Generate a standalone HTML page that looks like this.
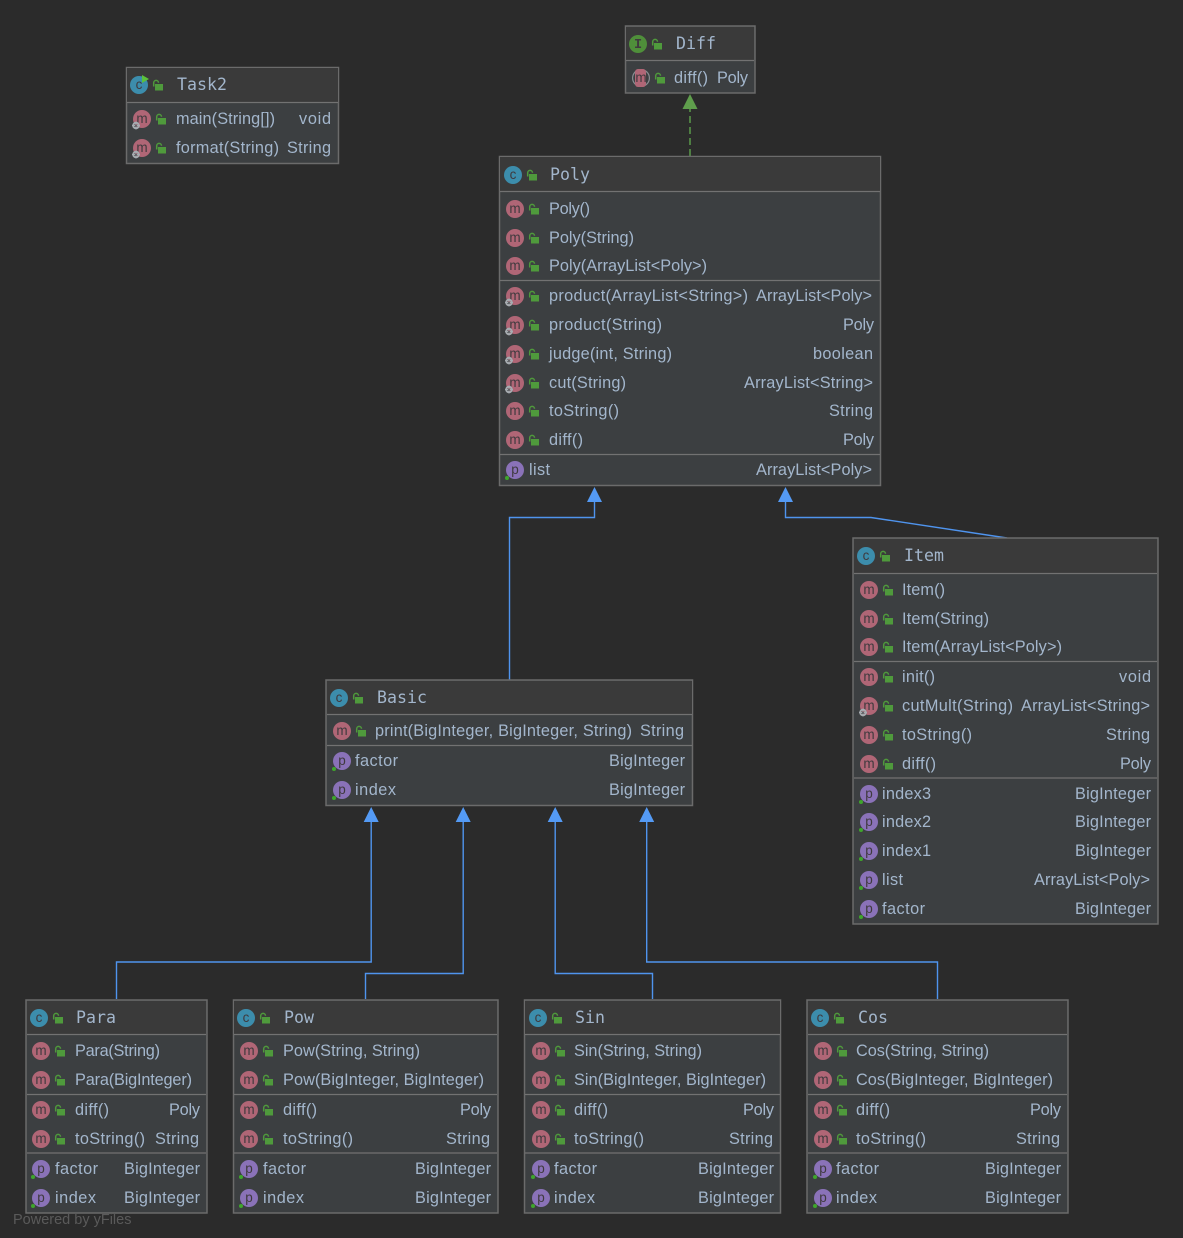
<!DOCTYPE html>
<html lang="en"><head><meta charset="utf-8"><title>Diagram</title>
<style>
html,body{margin:0;padding:0;background:#2b2b2b}
svg{display:block}
.b{fill:#3c3f41;stroke:#6b6b6b;stroke-width:1.5}
.h{fill:#3a3a3a}
.s{stroke:#727272;stroke-width:1.2}
.t{font:16.3px "Liberation Sans",sans-serif;fill:#a3b6cc}
.r{text-anchor:end}
.n{font:16.6px "DejaVu Sans Mono","Liberation Mono",monospace;fill:#a3b6cc}
.i{font:13.5px "Liberation Sans",sans-serif;text-anchor:middle;fill:#3f3a3e}
.c{fill:#3c8dac}.m{fill:#b06676}.p{fill:#8a72b8}.g{fill:#4f8f3a}
.e{fill:none;stroke:#4f94ee;stroke-width:1.4}
.a{fill:#549af4}
</style></head>
<body>
<svg width="1183" height="1238" viewBox="0 0 1183 1238" xmlns="http://www.w3.org/2000/svg">
<defs>
<g id="l"><rect x="-3" y="-1" width="8" height="6.500" fill="#4f9a3c"/><path d="M-4.300 1.500V-2.200a2.400 2.400 0 0 1 4.800 0" fill="none" stroke="#4f9a3c" stroke-width="1.500"/></g>
<g id="gr"><circle cx="-6" cy="6.500" r="2.800" fill="none" stroke="#a6abb0" stroke-width="2"/><path d="M-6 2.500v8M-10 6.500h8" stroke="#a6abb0" stroke-width="1"/><circle cx="-6" cy="6.500" r="1" fill="#5d6064"/></g>
<circle id="d" cx="-8" cy="8" r="2" fill="#3fa52c"/>
</defs>
<rect width="1183" height="1238" fill="#2b2b2b"/>

<!-- edges -->
<path class="e" d="M509.500 680V517.500H594.500V500"/>
<path class="e" d="M1007 538L871 517.500H785.500V500"/>
<path class="e" d="M116.500 999V962H371.200V820"/>
<path class="e" d="M365.500 999V973.500H463.200V820"/>
<path class="e" d="M652.500 999V973.500H555.200V820"/>
<path class="e" d="M937.500 999V962H646.700V820"/>
<path class="a" d="M594.500 487l7.500 15h-15zM785.500 487l7.500 15h-15zM371.200 807l7.500 15h-15zM463.200 807l7.500 15h-15zM555.200 807l7.500 15h-15zM646.700 807l7.500 15h-15z"/>
<path d="M690 156V108" fill="none" stroke="#5b9a4a" stroke-width="1.500" stroke-dasharray="7 4"/>
<path d="M690 94l7.500 15h-15z" fill="#5f9e4c"/>

<!-- Task2 -->
<rect class="b" x="126.500" y="67.500" width="212" height="96"/><rect class="h" x="127" y="68" width="211" height="34"/><path class="s" d="M127 102.500H338"/>
<g transform="translate(139 85)"><circle class="c" r="9"/><text class="i" y="4">c</text><path d="M3-10l7 4-7 4z" fill="#5cc13a"/><use href="#l" x="19"/></g><text class="n" x="177" y="90">Task2</text>
<g transform="translate(142 119)"><circle class="m" r="9"/><text class="i" y="4">m</text><use href="#gr"/><use href="#l" x="19"/></g><text class="t" x="176" y="124" textLength="99">main(String[])</text><text class="t r" x="331" y="124" textLength="32">void</text>
<g transform="translate(142 148)"><circle class="m" r="9"/><text class="i" y="4">m</text><use href="#gr"/><use href="#l" x="19"/></g><text class="t" x="176" y="153" textLength="103">format(String)</text><text class="t r" x="331" y="153" textLength="44">String</text>

<!-- Diff -->
<rect class="b" x="625.500" y="26" width="129.500" height="67"/><rect class="h" x="626" y="27" width="128" height="33"/><path class="s" d="M626 60.500H754"/>
<g transform="translate(638 44)"><circle class="g" r="9"/><text class="i" y="4" style="font-family:'Liberation Mono',monospace;font-weight:bold">I</text><use href="#l" x="19"/></g><text class="n" x="676" y="49">Diff</text>
<g transform="translate(641 78)"><circle r="9" fill="#8a8f94"/><circle r="7.800" fill="#3c3f41"/><rect x="-6" y="-9" width="11" height="18" rx="3" class="m"/><text class="i" y="4">m</text><use href="#l" x="19"/></g><text class="t" x="674" y="83" textLength="34">diff()</text><text class="t r" x="748" y="83" textLength="31">Poly</text>

<!-- Poly -->
<rect class="b" x="499.500" y="156.500" width="381" height="329"/><rect class="h" x="500" y="157" width="380" height="34"/><path class="s" d="M500 191.500H880M500 280.500H880M500 454.500H880"/>
<g transform="translate(513 175)"><circle class="c" r="9"/><text class="i" y="4">c</text><use href="#l" x="19"/></g><text class="n" x="550" y="180">Poly</text>
<g transform="translate(515 209)"><circle class="m" r="9"/><text class="i" y="4">m</text><use href="#l" x="19"/></g><text class="t" x="549" y="214" textLength="41">Poly()</text>
<g transform="translate(515 238)"><circle class="m" r="9"/><text class="i" y="4">m</text><use href="#l" x="19"/></g><text class="t" x="549" y="243" textLength="85">Poly(String)</text>
<g transform="translate(515 266)"><circle class="m" r="9"/><text class="i" y="4">m</text><use href="#l" x="19"/></g><text class="t" x="549" y="271" textLength="158">Poly(ArrayList&lt;Poly&gt;)</text>
<g transform="translate(515 296)"><circle class="m" r="9"/><text class="i" y="4">m</text><use href="#gr"/><use href="#l" x="19"/></g><text class="t" x="549" y="301" textLength="199">product(ArrayList&lt;String&gt;)</text><text class="t r" x="872" y="301" textLength="116">ArrayList&lt;Poly&gt;</text>
<g transform="translate(515 325)"><circle class="m" r="9"/><text class="i" y="4">m</text><use href="#gr"/><use href="#l" x="19"/></g><text class="t" x="549" y="330" textLength="113">product(String)</text><text class="t r" x="874" y="330" textLength="31">Poly</text>
<g transform="translate(515 354)"><circle class="m" r="9"/><text class="i" y="4">m</text><use href="#gr"/><use href="#l" x="19"/></g><text class="t" x="549" y="359" textLength="123">judge(int, String)</text><text class="t r" x="873" y="359" textLength="60">boolean</text>
<g transform="translate(515 383)"><circle class="m" r="9"/><text class="i" y="4">m</text><use href="#gr"/><use href="#l" x="19"/></g><text class="t" x="549" y="388" textLength="77">cut(String)</text><text class="t r" x="873" y="388" textLength="129">ArrayList&lt;String&gt;</text>
<g transform="translate(515 411)"><circle class="m" r="9"/><text class="i" y="4">m</text><use href="#l" x="19"/></g><text class="t" x="549" y="416" textLength="70">toString()</text><text class="t r" x="873" y="416" textLength="44">String</text>
<g transform="translate(515 440)"><circle class="m" r="9"/><text class="i" y="4">m</text><use href="#l" x="19"/></g><text class="t" x="549" y="445" textLength="34">diff()</text><text class="t r" x="874" y="445" textLength="31">Poly</text>
<g transform="translate(515 470)"><circle class="p" r="9"/><text class="i" y="4">p</text><use href="#d"/></g><text class="t" x="529" y="475" textLength="21">list</text><text class="t r" x="872" y="475" textLength="116">ArrayList&lt;Poly&gt;</text>

<!-- Item -->
<rect class="b" x="853" y="538" width="305" height="386"/><rect class="h" x="854" y="539" width="303" height="34"/><path class="s" d="M854 573.500H1157M854 661.500H1157M854 778H1157"/>
<g transform="translate(866 556)"><circle class="c" r="9"/><text class="i" y="4">c</text><use href="#l" x="19"/></g><text class="n" x="904" y="561">Item</text>
<g transform="translate(869 590)"><circle class="m" r="9"/><text class="i" y="4">m</text><use href="#l" x="19"/></g><text class="t" x="902" y="595" textLength="43">Item()</text>
<g transform="translate(869 619)"><circle class="m" r="9"/><text class="i" y="4">m</text><use href="#l" x="19"/></g><text class="t" x="902" y="624" textLength="87">Item(String)</text>
<g transform="translate(869 647)"><circle class="m" r="9"/><text class="i" y="4">m</text><use href="#l" x="19"/></g><text class="t" x="902" y="652" textLength="160">Item(ArrayList&lt;Poly&gt;)</text>
<g transform="translate(869 677)"><circle class="m" r="9"/><text class="i" y="4">m</text><use href="#l" x="19"/></g><text class="t" x="902" y="682" textLength="33">init()</text><text class="t r" x="1151" y="682" textLength="32">void</text>
<g transform="translate(869 706)"><circle class="m" r="9"/><text class="i" y="4">m</text><use href="#gr"/><use href="#l" x="19"/></g><text class="t" x="902" y="711" textLength="111">cutMult(String)</text><text class="t r" x="1150" y="711" textLength="129">ArrayList&lt;String&gt;</text>
<g transform="translate(869 735)"><circle class="m" r="9"/><text class="i" y="4">m</text><use href="#l" x="19"/></g><text class="t" x="902" y="740" textLength="70">toString()</text><text class="t r" x="1150" y="740" textLength="44">String</text>
<g transform="translate(869 764)"><circle class="m" r="9"/><text class="i" y="4">m</text><use href="#l" x="19"/></g><text class="t" x="902" y="769" textLength="34">diff()</text><text class="t r" x="1151" y="769" textLength="31">Poly</text>
<g transform="translate(869 794)"><circle class="p" r="9"/><text class="i" y="4">p</text><use href="#d"/></g><text class="t" x="882" y="799" textLength="49">index3</text><text class="t r" x="1151" y="799" textLength="76">BigInteger</text>
<g transform="translate(869 822)"><circle class="p" r="9"/><text class="i" y="4">p</text><use href="#d"/></g><text class="t" x="882" y="827" textLength="49">index2</text><text class="t r" x="1151" y="827" textLength="76">BigInteger</text>
<g transform="translate(869 851)"><circle class="p" r="9"/><text class="i" y="4">p</text><use href="#d"/></g><text class="t" x="882" y="856" textLength="49">index1</text><text class="t r" x="1151" y="856" textLength="76">BigInteger</text>
<g transform="translate(869 880)"><circle class="p" r="9"/><text class="i" y="4">p</text><use href="#d"/></g><text class="t" x="882" y="885" textLength="21">list</text><text class="t r" x="1150" y="885" textLength="116">ArrayList&lt;Poly&gt;</text>
<g transform="translate(869 909)"><circle class="p" r="9"/><text class="i" y="4">p</text><use href="#d"/></g><text class="t" x="882" y="914" textLength="43">factor</text><text class="t r" x="1151" y="914" textLength="76">BigInteger</text>

<!-- Basic -->
<rect class="b" x="326" y="680" width="366.500" height="125.500"/><rect class="h" x="327" y="681" width="365" height="33"/><path class="s" d="M327 714.500H692M327 745.500H692"/>
<g transform="translate(339 698)"><circle class="c" r="9"/><text class="i" y="4">c</text><use href="#l" x="19"/></g><text class="n" x="377" y="703">Basic</text>
<g transform="translate(342 731)"><circle class="m" r="9"/><text class="i" y="4">m</text><use href="#l" x="19"/></g><text class="t" x="375" y="736" textLength="257">print(BigInteger, BigInteger, String)</text><text class="t r" x="684" y="736" textLength="44">String</text>
<g transform="translate(342 761)"><circle class="p" r="9"/><text class="i" y="4">p</text><use href="#d"/></g><text class="t" x="355" y="766" textLength="43">factor</text><text class="t r" x="685" y="766" textLength="76">BigInteger</text>
<g transform="translate(342 790)"><circle class="p" r="9"/><text class="i" y="4">p</text><use href="#d"/></g><text class="t" x="355" y="795" textLength="41">index</text><text class="t r" x="685" y="795" textLength="76">BigInteger</text>

<!-- Para -->
<rect class="b" x="26" y="1000" width="181" height="213"/><rect class="h" x="27" y="1001" width="179" height="33"/><path class="s" d="M27 1034.500H206M27 1094.500H206M27 1153H206"/>
<g transform="translate(39 1018)"><circle class="c" r="9"/><text class="i" y="4">c</text><use href="#l" x="19"/></g><text class="n" x="76" y="1023">Para</text>
<g transform="translate(41 1051)"><circle class="m" r="9"/><text class="i" y="4">m</text><use href="#l" x="19"/></g><text class="t" x="75" y="1056" textLength="85">Para(String)</text>
<g transform="translate(41 1080)"><circle class="m" r="9"/><text class="i" y="4">m</text><use href="#l" x="19"/></g><text class="t" x="75" y="1085" textLength="117">Para(BigInteger)</text>
<g transform="translate(41 1110)"><circle class="m" r="9"/><text class="i" y="4">m</text><use href="#l" x="19"/></g><text class="t" x="75" y="1115" textLength="34">diff()</text><text class="t r" x="200" y="1115" textLength="31">Poly</text>
<g transform="translate(41 1139)"><circle class="m" r="9"/><text class="i" y="4">m</text><use href="#l" x="19"/></g><text class="t" x="75" y="1144" textLength="70">toString()</text><text class="t r" x="199" y="1144" textLength="44">String</text>
<g transform="translate(41 1169)"><circle class="p" r="9"/><text class="i" y="4">p</text><use href="#d"/></g><text class="t" x="55" y="1174" textLength="43">factor</text><text class="t r" x="200" y="1174" textLength="76">BigInteger</text>
<g transform="translate(41 1198)"><circle class="p" r="9"/><text class="i" y="4">p</text><use href="#d"/></g><text class="t" x="55" y="1203" textLength="41">index</text><text class="t r" x="200" y="1203" textLength="76">BigInteger</text>

<!-- Pow -->
<rect class="b" x="233.500" y="1000" width="264.500" height="213"/><rect class="h" x="234" y="1001" width="263" height="33"/><path class="s" d="M234 1034.500H497M234 1094.500H497M234 1153H497"/>
<g transform="translate(246 1018)"><circle class="c" r="9"/><text class="i" y="4">c</text><use href="#l" x="19"/></g><text class="n" x="284" y="1023">Pow</text>
<g transform="translate(249 1051)"><circle class="m" r="9"/><text class="i" y="4">m</text><use href="#l" x="19"/></g><text class="t" x="283" y="1056" textLength="137">Pow(String, String)</text>
<g transform="translate(249 1080)"><circle class="m" r="9"/><text class="i" y="4">m</text><use href="#l" x="19"/></g><text class="t" x="283" y="1085" textLength="201">Pow(BigInteger, BigInteger)</text>
<g transform="translate(249 1110)"><circle class="m" r="9"/><text class="i" y="4">m</text><use href="#l" x="19"/></g><text class="t" x="283" y="1115" textLength="34">diff()</text><text class="t r" x="491" y="1115" textLength="31">Poly</text>
<g transform="translate(249 1139)"><circle class="m" r="9"/><text class="i" y="4">m</text><use href="#l" x="19"/></g><text class="t" x="283" y="1144" textLength="70">toString()</text><text class="t r" x="490" y="1144" textLength="44">String</text>
<g transform="translate(249 1169)"><circle class="p" r="9"/><text class="i" y="4">p</text><use href="#d"/></g><text class="t" x="263" y="1174" textLength="43">factor</text><text class="t r" x="491" y="1174" textLength="76">BigInteger</text>
<g transform="translate(249 1198)"><circle class="p" r="9"/><text class="i" y="4">p</text><use href="#d"/></g><text class="t" x="263" y="1203" textLength="41">index</text><text class="t r" x="491" y="1203" textLength="76">BigInteger</text>

<!-- Sin -->
<rect class="b" x="524.500" y="1000" width="256" height="213"/><rect class="h" x="525" y="1001" width="255" height="33"/><path class="s" d="M525 1034.500H780M525 1094.500H780M525 1153H780"/>
<g transform="translate(538 1018)"><circle class="c" r="9"/><text class="i" y="4">c</text><use href="#l" x="19"/></g><text class="n" x="575" y="1023">Sin</text>
<g transform="translate(541 1051)"><circle class="m" r="9"/><text class="i" y="4">m</text><use href="#l" x="19"/></g><text class="t" x="574" y="1056" textLength="128">Sin(String, String)</text>
<g transform="translate(541 1080)"><circle class="m" r="9"/><text class="i" y="4">m</text><use href="#l" x="19"/></g><text class="t" x="574" y="1085" textLength="192">Sin(BigInteger, BigInteger)</text>
<g transform="translate(541 1110)"><circle class="m" r="9"/><text class="i" y="4">m</text><use href="#l" x="19"/></g><text class="t" x="574" y="1115" textLength="34">diff()</text><text class="t r" x="774" y="1115" textLength="31">Poly</text>
<g transform="translate(541 1139)"><circle class="m" r="9"/><text class="i" y="4">m</text><use href="#l" x="19"/></g><text class="t" x="574" y="1144" textLength="70">toString()</text><text class="t r" x="773" y="1144" textLength="44">String</text>
<g transform="translate(541 1169)"><circle class="p" r="9"/><text class="i" y="4">p</text><use href="#d"/></g><text class="t" x="554" y="1174" textLength="43">factor</text><text class="t r" x="774" y="1174" textLength="76">BigInteger</text>
<g transform="translate(541 1198)"><circle class="p" r="9"/><text class="i" y="4">p</text><use href="#d"/></g><text class="t" x="554" y="1203" textLength="41">index</text><text class="t r" x="774" y="1203" textLength="76">BigInteger</text>

<!-- Cos -->
<rect class="b" x="807" y="1000" width="261" height="213"/><rect class="h" x="808" y="1001" width="259" height="33"/><path class="s" d="M808 1034.500H1067M808 1094.500H1067M808 1153H1067"/>
<g transform="translate(820 1018)"><circle class="c" r="9"/><text class="i" y="4">c</text><use href="#l" x="19"/></g><text class="n" x="858" y="1023">Cos</text>
<g transform="translate(823 1051)"><circle class="m" r="9"/><text class="i" y="4">m</text><use href="#l" x="19"/></g><text class="t" x="856" y="1056" textLength="133">Cos(String, String)</text>
<g transform="translate(823 1080)"><circle class="m" r="9"/><text class="i" y="4">m</text><use href="#l" x="19"/></g><text class="t" x="856" y="1085" textLength="197">Cos(BigInteger, BigInteger)</text>
<g transform="translate(823 1110)"><circle class="m" r="9"/><text class="i" y="4">m</text><use href="#l" x="19"/></g><text class="t" x="856" y="1115" textLength="34">diff()</text><text class="t r" x="1061" y="1115" textLength="31">Poly</text>
<g transform="translate(823 1139)"><circle class="m" r="9"/><text class="i" y="4">m</text><use href="#l" x="19"/></g><text class="t" x="856" y="1144" textLength="70">toString()</text><text class="t r" x="1060" y="1144" textLength="44">String</text>
<g transform="translate(823 1169)"><circle class="p" r="9"/><text class="i" y="4">p</text><use href="#d"/></g><text class="t" x="836" y="1174" textLength="43">factor</text><text class="t r" x="1061" y="1174" textLength="76">BigInteger</text>
<g transform="translate(823 1198)"><circle class="p" r="9"/><text class="i" y="4">p</text><use href="#d"/></g><text class="t" x="836" y="1203" textLength="41">index</text><text class="t r" x="1061" y="1203" textLength="76">BigInteger</text>

<text x="13" y="1224" style="font:14.500px 'Liberation Sans',sans-serif;fill:#5a5a5a">Powered by yFiles</text>
</svg>
</body></html>
